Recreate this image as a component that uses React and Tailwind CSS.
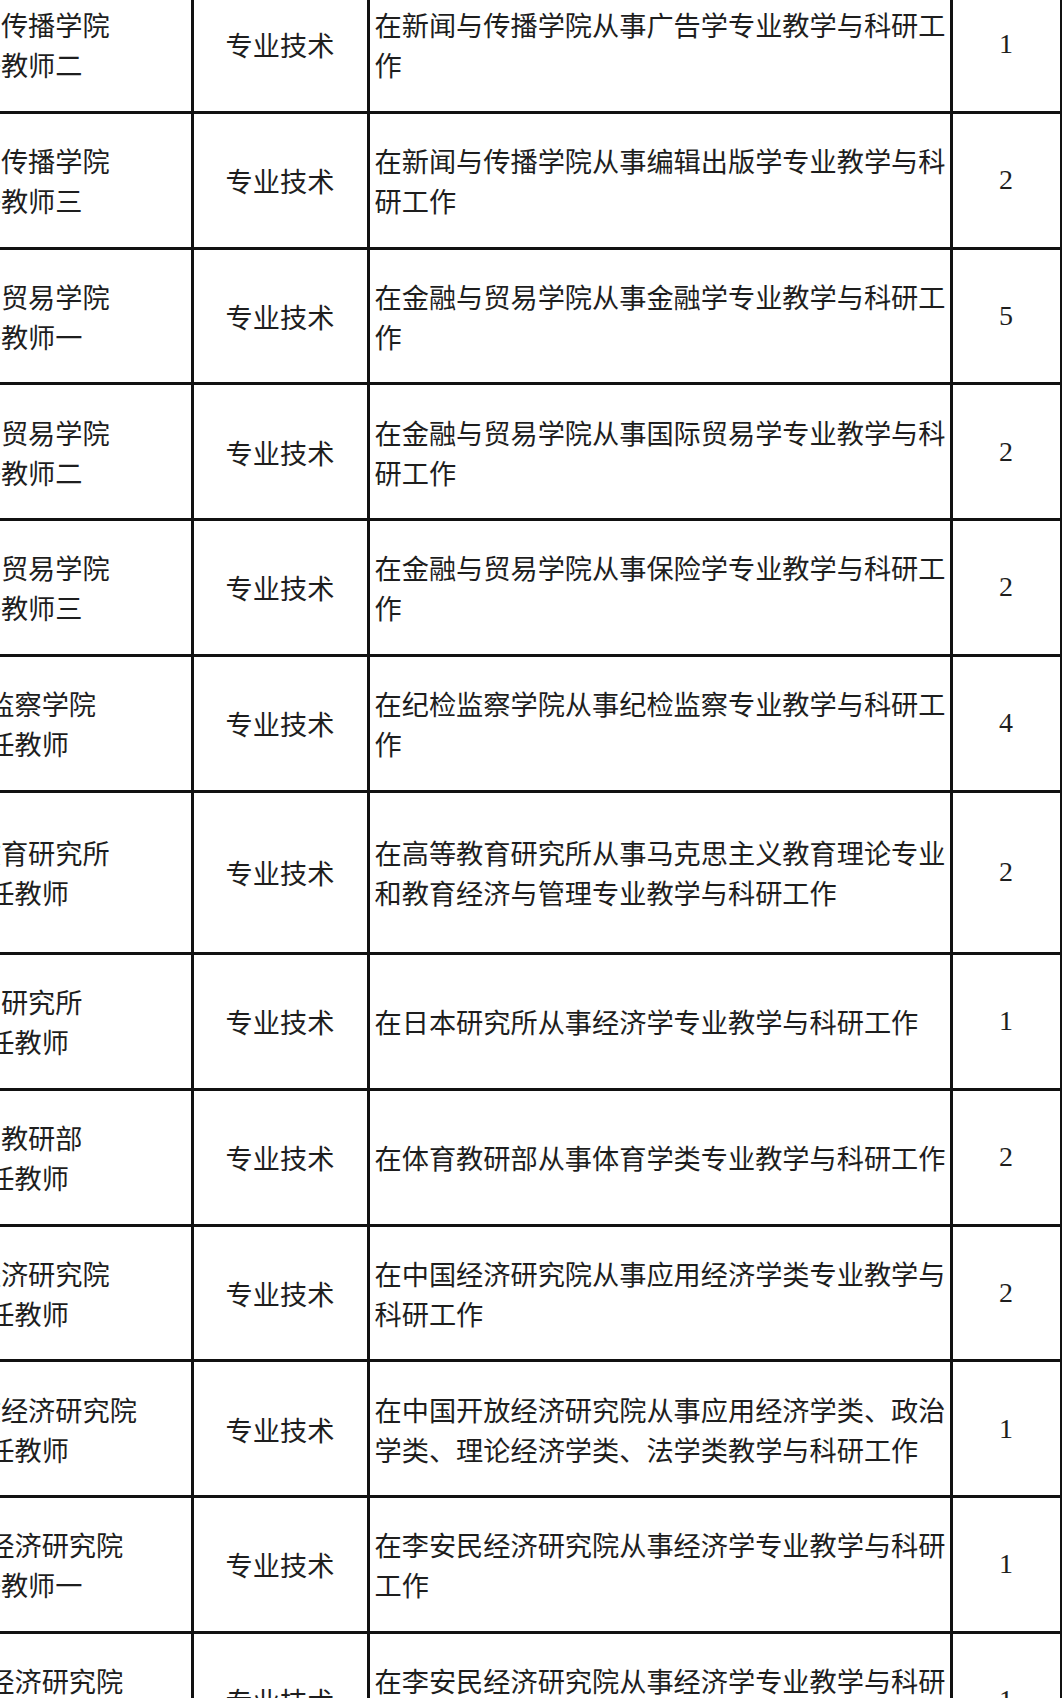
const rows = [
  { unit: ["新闻与传播学院", "专任教师二"], duty: "在新闻与传播学院从事广告学专业教学与科研工作", count: 1 },
  { unit: ["新闻与传播学院", "专任教师三"], duty: "在新闻与传播学院从事编辑出版学专业教学与科研工作", count: 2 },
  { unit: ["金融与贸易学院", "专任教师一"], duty: "在金融与贸易学院从事金融学专业教学与科研工作", count: 5 },
  { unit: ["金融与贸易学院", "专任教师二"], duty: "在金融与贸易学院从事国际贸易学专业教学与科研工作", count: 2 },
  { unit: ["金融与贸易学院", "专任教师三"], duty: "在金融与贸易学院从事保险学专业教学与科研工作", count: 2 },
  { unit: ["纪检监察学院", "专任教师"], duty: "在纪检监察学院从事纪检监察专业教学与科研工作", count: 4 },
  {
    unit: ["高等教育研究所", "专任教师"],
    duty: "在高等教育研究所从事马克思主义教育理论专业和教育经济与管理专业教学与科研工作",
    count: 2,
    tall: true,
  },
  { unit: ["日本研究所", "专任教师"], duty: "在日本研究所从事经济学专业教学与科研工作", count: 1 },
  { unit: ["体育教研部", "专任教师"], duty: "在体育教研部从事体育学类专业教学与科研工作", count: 2 },
  { unit: ["中国经济研究院", "专任教师"], duty: "在中国经济研究院从事应用经济学类专业教学与科研工作", count: 2 },
  {
    unit: ["中国开放经济研究院", "专任教师"],
    duty: "在中国开放经济研究院从事应用经济学类、政治学类、理论经济学类、法学类教学与科研工作",
    count: 1,
  },
  { unit: ["李安民经济研究院", "专任教师一"], duty: "在李安民经济研究院从事经济学专业教学与科研工作", count: 1 },
  { unit: ["李安民经济研究院", "专任教师二"], duty: "在李安民经济研究院从事经济学专业教学与科研工作", count: 1 },
];

const cjk = "font-['Noto_Sans_CJK_SC',sans-serif]";

const Row = ({ row }) => (
  <div
    className={`grid grid-cols-[355px_176px_583px_110px] border-b-[3px] border-[#111] ${
      row.tall ? "h-[162.5px]" : "h-[135.75px]"
    }`}
  >
    {/* 招聘部门 / 岗位 */}
    <div className="flex flex-col items-center justify-center border-r-[3px] border-[#111] whitespace-nowrap leading-[40px]">
      {row.unit.map((line) => (
        <span key={line}>{line}</span>
      ))}
    </div>

    {/* 岗位类别 */}
    <div className="flex items-center justify-center border-r-[3px] border-[#111] leading-[40px]">
      专业技术
    </div>

    {/* 岗位职责 */}
    <div className="flex items-center border-r-[3px] border-[#111] pl-[5px] leading-[40px]">
      <p>{row.duty}</p>
    </div>

    {/* 人数 */}
    <div className="flex items-center justify-center border-r-[3px] border-[#111] font-['Liberation_Serif',serif] text-[28px]">
      {row.count}
    </div>
  </div>
);

export default function App() {
  return (
    <div className={`w-[1062px] h-[1698px] overflow-hidden bg-white text-[#1e1e1e] text-[27.2px] ${cjk}`}>
      <div className="mt-[-22px] ml-[-161.5px] w-[1224px]">
        {rows.map((row, i) => (
          <Row key={i} row={row} />
        ))}
      </div>
    </div>
  );
}
